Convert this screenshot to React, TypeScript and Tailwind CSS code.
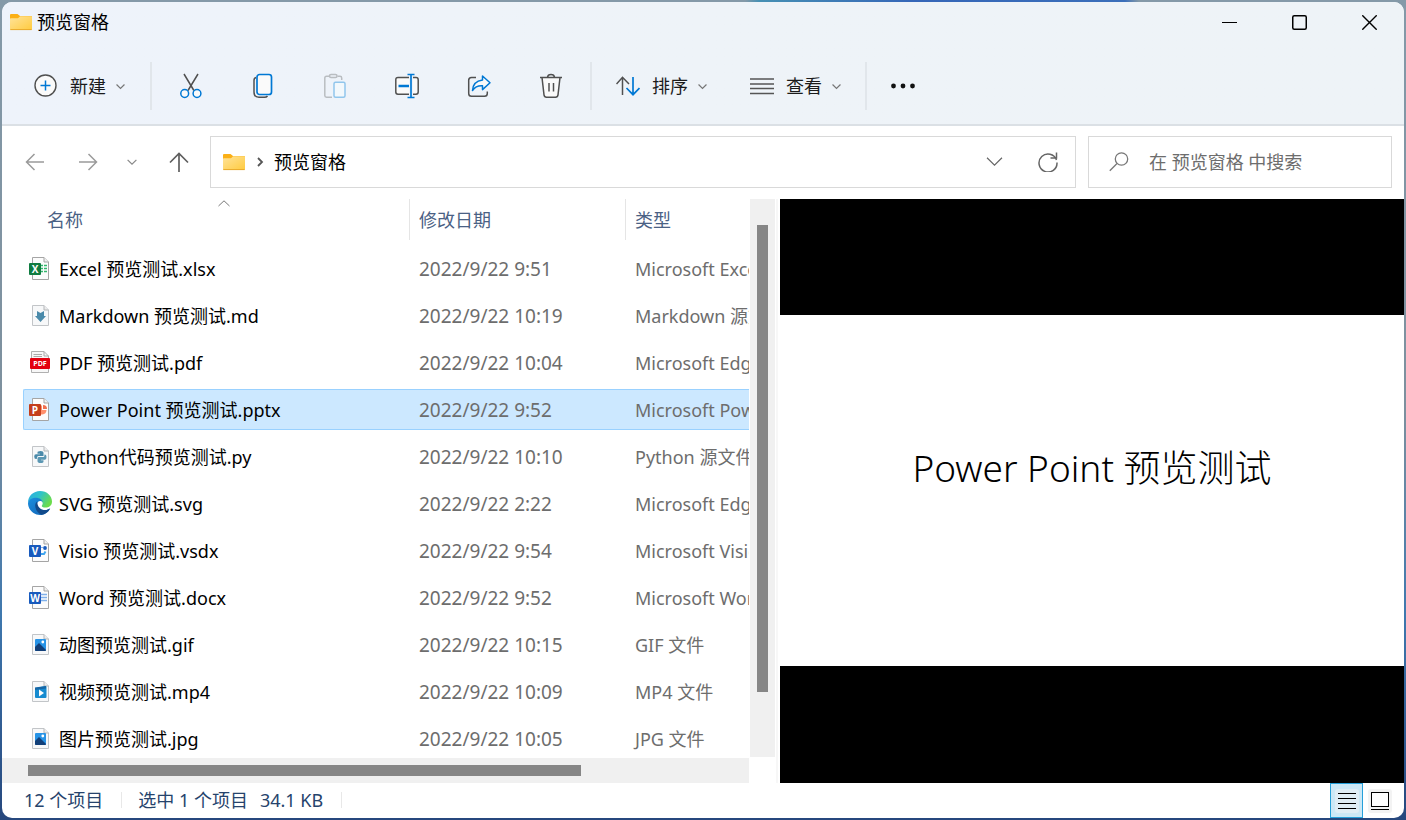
import React from 'react';

type FileKind = 'excel' | 'markdown' | 'pdf' | 'powerpoint' | 'python' | 'edge' | 'visio' | 'word' | 'image' | 'video';

interface FileEntry {
  name: string;
  modified: string;
  type: string;
  kind: FileKind;
}

const files: FileEntry[] = [
  { name: 'Excel 预览测试.xlsx', modified: '2022/9/22 9:51', type: 'Microsoft Excel 工作表', kind: 'excel' },
  { name: 'Markdown 预览测试.md', modified: '2022/9/22 10:19', type: 'Markdown 源文件', kind: 'markdown' },
  { name: 'PDF 预览测试.pdf', modified: '2022/9/22 10:04', type: 'Microsoft Edge PDF Document', kind: 'pdf' },
  { name: 'Power Point 预览测试.pptx', modified: '2022/9/22 9:52', type: 'Microsoft PowerPoint 演示文稿', kind: 'powerpoint' },
  { name: 'Python代码预览测试.py', modified: '2022/9/22 10:10', type: 'Python 源文件', kind: 'python' },
  { name: 'SVG 预览测试.svg', modified: '2022/9/22 2:22', type: 'Microsoft Edge HTML Document', kind: 'edge' },
  { name: 'Visio 预览测试.vsdx', modified: '2022/9/22 9:54', type: 'Microsoft Visio 绘图', kind: 'visio' },
  { name: 'Word 预览测试.docx', modified: '2022/9/22 9:52', type: 'Microsoft Word 文档', kind: 'word' },
  { name: '动图预览测试.gif', modified: '2022/9/22 10:15', type: 'GIF 文件', kind: 'image' },
  { name: '视频预览测试.mp4', modified: '2022/9/22 10:09', type: 'MP4 文件', kind: 'video' },
  { name: '图片预览测试.jpg', modified: '2022/9/22 10:05', type: 'JPG 文件', kind: 'image' },
];

const FolderIcon: React.FC = () => (
  <svg width="23" height="18" viewBox="0 0 23 18" className="shrink-0">
    <defs>
      <linearGradient id="folder" x1="0" y1="0" x2="1" y2="1">
        <stop offset="0" stopColor="#ffe39a" />
        <stop offset="1" stopColor="#ffcb3f" />
      </linearGradient>
    </defs>
    <path d="M0 2Q0 1 1 1H7.500L10 3H21Q22 3 22 4V9H0Z" fill="#fbb016" />
    <path d="M0 6Q0 5.200.8 5.200H8L10.200 3.200H21.200Q22 3.200 22 4V16Q22 17 21 17H1Q0 17 0 16Z" fill="url(#folder)" />
    <path d="M.3 16.600H21.700" stroke="#e9a92b" />
  </svg>
);

interface ChevronProps {
  size?: number;
  className?: string;
}

const ChevronDown: React.FC<ChevronProps> = ({ size = 9, className = 'text-[#777]' }) => (
  <svg width={size} height={size} viewBox="0 0 10 10" fill="none" stroke="currentColor" className={className}>
    <path d="M.6 2.800 5 7.200 9.400 2.800" vectorEffect="non-scaling-stroke" strokeWidth="1.200" />
  </svg>
);

const NewIcon = () => (
  <svg width="24" height="24" viewBox="0 0 24 24" fill="none">
    <circle cx="11.500" cy="11.500" r="10.500" fill="#fafafa" stroke="#505050" strokeWidth="1.400" />
    <path d="M11.500 6.500v10M6.500 11.500h10" stroke="#0078d4" strokeWidth="1.500" />
  </svg>
);

const CutIcon = () => (
  <svg width="24" height="26" viewBox="0 0 24 26" fill="none" strokeWidth="1.500">
    <path d="M5 1 14.900 17.500M19 1 9 17.500" stroke="#505050" />
    <circle cx="5.700" cy="20.500" r="3.900" stroke="#0078d4" fill="#fafafa" />
    <circle cx="18" cy="20.500" r="3.900" stroke="#0078d4" fill="#fafafa" />
  </svg>
);

const CopyIcon = () => (
  <svg width="24" height="26" viewBox="0 0 24 26" fill="none" strokeWidth="1.500">
    <path d="M5 4.500Q3 5 3 7.500V19Q3 24.300 8 24.300H13.500Q15.500 24.300 16.500 23" stroke="#505050" />
    <rect x="6" y="1.500" width="14.500" height="20" rx="2.500" fill="#fafafa" stroke="#0078d4" strokeWidth="1.700" />
  </svg>
);

const PasteIcon = () => (
  <svg width="24" height="26" viewBox="0 0 24 26" fill="none" strokeWidth="1.500">
    <path d="M6 3.300H3.500Q1.800 3.300 1.800 5V22.500Q1.800 24.200 3.500 24.200H9M14.500 3.300H17Q18.700 3.300 18.700 5V7" stroke="#b9bdc1" />
    <rect x="6.500" y="1.500" width="7.500" height="3" rx="1.500" stroke="#b9bdc1" />
    <rect x="11" y="9.200" width="11" height="15" rx="1.500" fill="#f2f8fc" stroke="#91c6ec" />
  </svg>
);

const RenameIcon = () => (
  <svg width="26" height="26" viewBox="0 0 26 26" fill="none" strokeWidth="1.500">
    <path d="M15 4.500H4Q1.800 4.500 1.800 6.700V19Q1.800 21.200 4 21.200H15M19 4.500H22Q24.200 4.500 24.200 6.700V19Q24.200 21.200 22 21.200H19" stroke="#505050" fill="#fafafa" />
    <path d="M4.500 13H15" stroke="#0078d4" strokeWidth="2.600" />
    <path d="M17 1.500V24.500M13.500 1.500H20.500M13.500 24.500H20.500" stroke="#0078d4" strokeWidth="1.700" />
  </svg>
);

const ShareIcon = () => (
  <svg width="26" height="26" viewBox="0 0 26 26" fill="none" strokeWidth="1.500" strokeLinejoin="round">
    <path d="M10 4.500H5.500Q2.700 4.500 2.700 7.300V20.500Q2.700 23.300 5.500 23.300H18.500Q21.300 23.300 21.300 20.500V18.500" stroke="#505050" />
    <path d="M16.500 3 24 9.800 16.500 16.600V12.800Q10 12.300 6.500 17.500Q7 8.300 16.500 7Z" stroke="#0078d4" fill="#fafafa" />
  </svg>
);

const DeleteIcon = () => (
  <svg width="26" height="26" viewBox="0 0 26 26" fill="none" stroke="#505050" strokeWidth="1.500">
    <path d="M9.500 4.300Q9.800 1.500 13 1.500Q16.200 1.500 16.500 4.300" />
    <path d="M4 4.500 6 21.800Q6.300 24.200 8.500 24.200H17.500Q19.700 24.200 20 21.800L22 4.500" fill="#fafafa" />
    <path d="M2 4.500H24M11 10V18.500M15.500 10V18.500" />
  </svg>
);

const SortIcon = () => (
  <svg width="24" height="22" viewBox="1 0 24 22" fill="none" strokeWidth="1.500">
    <path d="M7.500 20V2.500M1.500 9 7.500 2.300 14 9" stroke="#505050" />
    <path d="M18 2V19.500M11.500 13 18 19.700 24.500 13" stroke="#0078d4" strokeWidth="1.700" />
  </svg>
);

const ViewIcon = () => (
  <svg width="24" height="18" viewBox="0 0 24 18" stroke="#555" strokeWidth="1.400">
    <path d="M0 2H24M0 7H24M0 11.500H24M0 16.500H24" />
  </svg>
);

interface OfficeIconProps {
  letter: string;
  color: string;
  children: React.ReactNode;
}

const PagePath = () => (
  <>
    <path d="M4.500 1.500H16L20.500 6V23.500H4.500Z" fill="#fcfcfc" stroke="#a5a5a5" />
    <path d="M16 1.500V6H20.500" fill="#f0f0f0" stroke="#a5a5a5" />
  </>
);

const SmallPagePath = () => (
  <>
    <path d="M4.500 2.500H16L20.500 7V22.500H4.500Z" fill="#f7f8f9" stroke="#c2c5c8" />
    <path d="M16 2.500V7H20.500" fill="#ececec" stroke="#b5b8bb" />
  </>
);

const OfficeIcon: React.FC<OfficeIconProps> = ({ letter, color, children }) => (
  <>
    <PagePath />
    {children}
    <rect x="1" y="7" width="12" height="12" rx="1" fill={color} />
    <text x="7" y="16.500" textAnchor="middle" fontSize="10" fontWeight="700" fill="#fff" fontFamily="Open Sans, sans-serif">
      {letter}
    </text>
  </>
);

const renderIcon = (kind: FileKind) => {
  switch (kind) {
    case 'excel':
      return (
        <OfficeIcon letter="X" color="#107c41">
          <path d="M13 9.500H15M16 9.500H19M13 12.500H15M16 12.500H19M13 15.500H15M16 15.500H19" stroke="#33b66e" strokeWidth="1.500" />
        </OfficeIcon>
      );
    case 'word':
      return (
        <OfficeIcon letter="W" color="#185abd">
          <path d="M13 9.500H19M13 12.500H19M13 15.500H19" stroke="#7fb0ea" strokeWidth="1.400" />
        </OfficeIcon>
      );
    case 'powerpoint':
      return (
        <OfficeIcon letter="P" color="#c43e1c">
          <path d="M13 8.500A4.500 4.500 0 1 0 18.500 13H14V8.500Z" fill="#ff8f6b" />
          <path d="M15 8A4 4 0 0 1 19 12H15Z" fill="#f0704f" />
        </OfficeIcon>
      );
    case 'visio':
      return (
        <OfficeIcon letter="V" color="#185abd">
          <circle cx="17" cy="10" r="1.900" fill="#185abd" />
          <path d="M13 9.500H15" stroke="#7fb0ea" />
          <path d="M13 16H16L17.500 13.500" stroke="#41a5ee" strokeWidth="2" fill="none" />
        </OfficeIcon>
      );
    case 'markdown':
      return (
        <>
          <SmallPagePath />
          <path d="M9 8 12.500 10 16 8V13H18L12.500 19 7 13H9Z" fill="#4a8aaa" />
        </>
      );
    case 'python':
      return (
        <>
          <SmallPagePath />
          <path d="M9.500 8.500Q9.500 7 12.500 7Q15.500 7 15.500 9V12H10.500Q8.800 12 8.800 15H8Q6.200 15 6.200 12.500Q6.200 10.300 8 10.300H12V9.700H9.500Z" fill="#4a8aaa" />
          <path d="M15.500 17.500Q15.500 19 12.500 19Q9.500 19 9.500 17V14Q9.500 13 11 13H15.500Q16.500 13 16.500 10.500H17Q18.500 10.500 18.500 13Q18.500 15.700 17 15.700H13V16.300H15.500Z" fill="#5b97b3" />
        </>
      );
    case 'pdf':
      return (
        <>
          <path d="M3.500 1.500H16L20.500 6V22.500H3.500Z" fill="#f7f7f7" stroke="#b0b0b0" />
          <path d="M16 1.500V6H20.500M5.500 4.500H14M5.500 6.500H14" stroke="#aaa" fill="none" />
          <rect x="2" y="8" width="20" height="11" rx="1" fill="#e3000f" />
          <text x="12" y="16" textAnchor="middle" fontSize="7" fontWeight="700" fill="#fff" fontFamily="Open Sans, sans-serif">
            PDF
          </text>
        </>
      );
    case 'edge':
      return (
        <>
          <defs>
            <linearGradient id="edgeTop" x1="0" y1="0" x2="1" y2=".5">
              <stop offset="0" stopColor="#2aa9e8" />
              <stop offset=".5" stopColor="#2fc3c8" />
              <stop offset="1" stopColor="#6bdc4b" />
            </linearGradient>
            <linearGradient id="edgeBody" x1="0" y1="0" x2="1" y2="1">
              <stop offset="0" stopColor="#1b8ede" />
              <stop offset="1" stopColor="#1262b3" />
            </linearGradient>
          </defs>
          <path d="M0 11.500C0 5 5.500 0 12 0C19 0 24 5 24 10.500C24 14.500 21 16.500 17.500 16.500C15 16.500 13.500 15.700 13.800 14.700C15 13.500 15.200 11.500 13.500 9.800C9 6 2 8 0 11.500Z" fill="url(#edgeTop)" />
          <path d="M0 12C.5 8.500 4.500 6.800 8 6.800C11.500 6.800 14.500 9 14.800 11.500C13 8.800 9 9.800 9 13.500C9 18 13 20.500 17 19.500C19 19.200 21 17.800 22 17.200C20 21.500 16.500 24 12 24C5.500 24 0 18.500 0 12Z" fill="url(#edgeBody)" />
          <path d="M9.200 10.500C5.500 13 7 21 13.500 23.700C17 23.500 20.500 21 22.200 17.500C17.500 20.500 9.500 19.500 9.200 10.500Z" fill="#114a8b" />
        </>
      );
    case 'image':
      return (
        <>
          <SmallPagePath />
          <rect x="7" y="7" width="11" height="12" rx="1" fill="#2793e6" />
          <path d="M7 15 11 11 18 18Q18 19 17 19H8Q7 19 7 18Z" fill="#123f78" />
          <circle cx="14.800" cy="10" r="1.400" fill="#fff" />
        </>
      );
    case 'video':
      return (
        <>
          <SmallPagePath />
          <path d="M7 9 17.500 7Q18.500 7 18.500 8V18Q18.500 19 17.500 19H8Q7 19 7 18Z" fill="#168bd0" />
          <path d="M7 8.500 18 7V9.500L7 11Z" fill="#1466a6" />
          <path d="M11 10.500 16 14 11 17.500Z" fill="#fff" />
        </>
      );
  }
};

const FileIcon: React.FC<{ kind: FileKind }> = ({ kind }) => (
  <svg width="24" height="25" viewBox="0 0 24 25" className="shrink-0">
    {renderIcon(kind)}
  </svg>
);

interface ToolButtonProps {
  label: string;
  disabled?: boolean;
  children: React.ReactNode;
}

const ToolButton: React.FC<ToolButtonProps> = ({ label, disabled = false, children }) => (
  <button type="button" aria-label={label} disabled={disabled} className="flex h-12 w-[72px] items-center justify-center">
    {children}
  </button>
);

const MenuButton: React.FC<{ label: string; children: React.ReactNode }> = ({ label, children }) => (
  <button type="button" className="flex h-12 items-center gap-3 whitespace-nowrap text-[#1b1b1b]">
    {children}
    <span className="-mr-0.5">{label}</span>
    <ChevronDown />
  </button>
);

const Divider = () => <div className="h-12 w-0.5 shrink-0 bg-[#e1e6eb]" />;

const TitleBar = () => (
  <div className="flex h-10 items-center justify-between">
    <div className="flex items-center gap-1 pl-2">
      <FolderIcon />
      <h1>预览窗格</h1>
    </div>
    <div className="flex h-full">
      <button type="button" aria-label="最小化" className="flex w-[70px] items-center justify-center">
        <svg width="15" height="15" stroke="#000"><path d="M0 7.500H15" /></svg>
      </button>
      <button type="button" aria-label="最大化" className="flex w-[70px] items-center justify-center">
        <svg width="15" height="15" fill="none" stroke="#000" strokeWidth="1.500"><rect x=".75" y=".75" width="13.500" height="13.500" rx="1.500" /></svg>
      </button>
      <button type="button" aria-label="关闭" className="flex w-[70px] items-center justify-center">
        <svg width="15" height="15" stroke="#000" strokeWidth="1.400"><path d="M.3.3 14.700 14.700M14.700.3.3 14.700" /></svg>
      </button>
    </div>
  </div>
);

const Toolbar = () => (
  <div className="flex h-[82px] items-center pt-1.5">
    <div className="flex w-[148px] justify-start pl-8">
      <MenuButton label="新建"><NewIcon /></MenuButton>
    </div>
    <Divider />
    <div className="flex px-[3px]">
      <ToolButton label="剪切"><CutIcon /></ToolButton>
      <ToolButton label="复制"><CopyIcon /></ToolButton>
      <ToolButton label="粘贴" disabled><PasteIcon /></ToolButton>
      <ToolButton label="重命名"><RenameIcon /></ToolButton>
      <ToolButton label="共享"><ShareIcon /></ToolButton>
      <ToolButton label="删除"><DeleteIcon /></ToolButton>
    </div>
    <Divider />
    <div className="flex gap-[43px] px-6">
      <MenuButton label="排序"><SortIcon /></MenuButton>
      <MenuButton label="查看"><ViewIcon /></MenuButton>
    </div>
    <Divider />
    <ToolButton label="查看更多">
      <svg width="24" height="6" viewBox="0 0 24 6" fill="#111">
        <circle cx="2.500" cy="3" r="2.400" />
        <circle cx="12" cy="3" r="2.400" />
        <circle cx="21.500" cy="3" r="2.400" />
      </svg>
    </ToolButton>
  </div>
);

const navButton = 'flex items-center justify-center';

const AddressRow = () => (
  <div className="flex h-[73px] items-center pr-3 pb-0.5 pl-1.5">
    <button type="button" aria-label="后退" className={`${navButton} w-[54px]`}>
      <svg width="20" height="18" fill="none" stroke="#9a9a9a" strokeWidth="1.500"><path d="M19 9H2M9.500 1 1.500 9 9.500 17" /></svg>
    </button>
    <button type="button" aria-label="前进" className={`${navButton} w-[52px]`}>
      <svg width="20" height="18" fill="none" stroke="#9a9a9a" strokeWidth="1.500"><path d="M1 9H18M10.500 1 18.500 9 10.500 17" /></svg>
    </button>
    <button type="button" aria-label="最近浏览的位置" className={`${navButton} w-9`}>
      <ChevronDown size={10} className="text-[#888]" />
    </button>
    <button type="button" aria-label="上移" className={`${navButton} w-[58px]`}>
      <svg width="20" height="20" fill="none" stroke="#5f5f5f" strokeWidth="1.700"><path d="M10 20V2M1 10.500 10 1.500 19 10.500" /></svg>
    </button>
    <div className="ml-0.5 flex h-[52px] min-w-0 flex-1 items-center border border-[#d9d9d9] pl-3">
      <div className="flex flex-1 items-center gap-2.5">
        <FolderIcon />
        <svg width="8" height="10" fill="none" stroke="#555" strokeWidth="1.800" className="shrink-0"><path d="M2 1 6 5 2 9" /></svg>
        <span className="whitespace-nowrap">预览窗格</span>
      </div>
      <button type="button" aria-label="以前的位置" className={`${navButton} w-[54px]`}>
        <ChevronDown size={17} className="text-[#666]" />
      </button>
      <button type="button" aria-label="刷新" className={`${navButton} w-[54px]`}>
        <svg width="20" height="20" fill="none" stroke="#666" strokeWidth="1.500"><path d="M18.500 8A9 9 0 1 0 19 10.500M18.500.5V6H12.500" /></svg>
      </button>
    </div>
    <label className="ml-3 flex h-[52px] w-[304px] items-center gap-5 border border-[#d9d9d9] pl-5">
      <svg width="20" height="20" fill="none" stroke="#777" strokeWidth="1.300" className="shrink-0">
        <circle cx="12.500" cy="7" r="6.200" />
        <path d="M8 11.500.8 18.700" />
      </svg>
      <input
        type="search"
        aria-label="搜索"
        placeholder="在 预览窗格 中搜索"
        className="w-full min-w-0 bg-transparent outline-none placeholder:text-[#6d6d6d]"
      />
    </label>
  </div>
);

const FileTable = () => (
  <div className="min-h-0 flex-1 overflow-hidden pl-[21px]">
    <table className="-mt-1.5 w-[960px] table-fixed border-separate border-spacing-x-0 border-spacing-y-1.5 text-left whitespace-nowrap">
      <colgroup>
        <col className="w-[387px]" />
        <col className="w-[216px]" />
        <col />
      </colgroup>
      <thead>
        <tr className="h-[43px] align-top text-[#4a6184]">
          <th scope="col" className="relative p-0 font-normal">
            <div className="flex h-[41px] items-center border-r border-[#e5e5e5] pl-6">名称</div>
            <svg width="12" height="7" fill="none" stroke="#777" className="absolute top-px left-[195px]"><path d="M.5 6 6 .8 11.500 6" /></svg>
          </th>
          <th scope="col" className="p-0 font-normal">
            <div className="flex h-[41px] items-center border-r border-[#e5e5e5] pl-[9px]">修改日期</div>
          </th>
          <th scope="col" className="p-0 font-normal">
            <div className="flex h-[41px] items-center pl-[9px]">类型</div>
          </th>
        </tr>
      </thead>
      <tbody>
        {files.map((file) => {
          const selected = file.kind === 'powerpoint';
          const cell = selected ? 'border-y border-[#99d1ff] bg-[#cce8ff]' : 'border-y border-transparent';
          return (
            <tr key={file.name} aria-selected={selected} className="h-[41px] text-[#6d6d6d]">
              <td className={`${cell} rounded-l-xs border-l p-0 text-black`}>
                <div className="flex items-center gap-[7px] pl-1">
                  <FileIcon kind={file.kind} />
                  {file.name}
                </div>
              </td>
              <td className={`${cell} p-0 pl-[9px] text-[19px]`}>{file.modified}</td>
              <td className={`${cell} p-0 pl-[9px]`}>{file.type}</td>
            </tr>
          );
        })}
      </tbody>
    </table>
  </div>
);

const FileList = () => (
  <div className="flex min-h-0 min-w-0 overflow-hidden">
    <div className="flex min-h-0 min-w-0 flex-1 flex-col">
      <FileTable />
      <div className="h-[25px] bg-[#f0f0f0] py-[7px] pr-[168px] pl-[26px]">
        <div className="h-[11px] bg-[#868686]" />
      </div>
    </div>
    <div className="mb-[26px] ml-px w-[25px] bg-[#f0f0f0] px-[7px] pt-[26px] pb-[65px]">
      <div className="h-full bg-[#868686]" />
    </div>
    <div className="mr-0.5 ml-px w-0.5 bg-[#f7f7f7]" />
  </div>
);

const PreviewPane = () => (
  <section aria-label="预览" className="flex min-h-0 min-w-0 flex-col justify-center bg-black pb-0.5">
    <div className="flex aspect-video items-center justify-center bg-white">
      <p className="pb-11 text-[37px] font-light whitespace-nowrap text-black">Power Point 预览测试</p>
    </div>
  </section>
);

const StatusBar = () => (
  <footer className="flex h-[35px] items-center text-[#26436c]">
    <div className="flex items-center pb-0.5">
      <span className="pl-[22px]">12 个项目</span>
      <span className="ml-[18px] h-4 w-px bg-[#e8e8e8]" />
      <span className="ml-4">选中 1 个项目</span>
      <span className="ml-3">34.1 KB</span>
      <span className="ml-[18px] h-4 w-px bg-[#e8e8e8]" />
    </div>
    <div className="mr-2 ml-auto flex h-full">
      <button type="button" aria-label="详细信息" className="flex w-[33px] items-center justify-center border border-[#26a0da] bg-[#cce8f6]">
        <svg width="24" height="24" stroke="#000">
          <rect width="24" height="24" rx="3" fill="#e0eef6" stroke="none" />
          <path d="M3 4.500H21M3 9.500H21M3 14.500H21M3 19.500H21" />
        </svg>
      </button>
      <button type="button" aria-label="大缩略图" className="flex w-[33px] items-center justify-center">
        <svg width="24" height="24" fill="none" stroke="#000">
          <rect width="24" height="24" rx="3" fill="#f3f3f3" stroke="none" />
          <rect x="3.500" y="3.500" width="17" height="14" fill="#fff" />
          <path d="M3 20.500H21" />
        </svg>
      </button>
    </div>
  </footer>
);

const App: React.FC = () => {
  return (
    <div className="h-screen bg-[linear-gradient(to_right,#8499a8_53%,#4690b4_54%,#3566b8_65%,#3b6fba_80%,#8499a8_81%)] bg-[length:100%_2px] bg-no-repeat font-['Noto_Sans','Noto_Sans_CJK_SC',sans-serif] text-[18px] leading-6 text-black">
      <div className="h-full bg-[linear-gradient(to_bottom,transparent_2px,#8499a8_2px,#7d909e_50%,#3f78ae_75%,#26477d)] p-0.5">
        <div className="flex h-full flex-col overflow-hidden rounded-[10px] bg-white">
          <header className="border-b-2 border-[#dbe0e5] bg-linear-to-r from-[#eef3fb] via-[#eef3f8] to-[#eef3f7]">
            <TitleBar />
            <Toolbar />
          </header>
          <AddressRow />
          <main className="grid min-h-0 flex-1 grid-cols-[778fr_624fr] grid-rows-1">
            <FileList />
            <PreviewPane />
          </main>
          <StatusBar />
        </div>
      </div>
    </div>
  );
};

export default App;
